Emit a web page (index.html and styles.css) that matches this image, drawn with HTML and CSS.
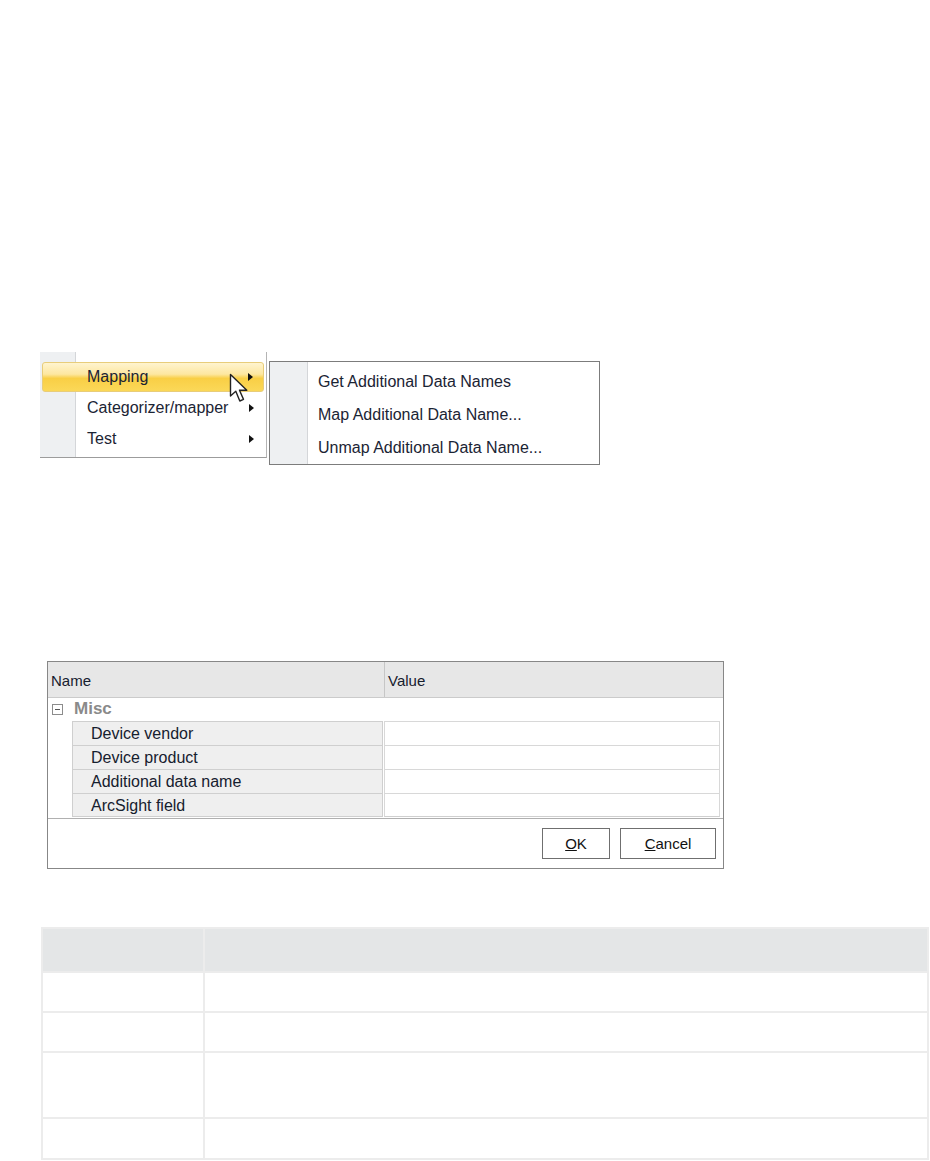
FILE: index.html
```html
<!doctype html>
<html lang="en">
<head>
	<meta charset="UTF-8">
	<title>Additional data mapping</title>
	<link rel="stylesheet" href="styles.css">
</head>
<body>
	<div class="menus">
		<ul class="ctx">
			<li class="item sel has-sub">Mapping</li>
			<li class="item has-sub">Categorizer/mapper</li>
			<li class="item has-sub">Test</li>
			<svg class="cursor" width="23" height="31" viewBox="0 0 23 31">
				<path d="M1.5 1.5 L1.5 23 L6.8 18.3 L10.8 28 L14.5 26.4 L10.5 17.2 L17.8 17.2 Z" fill="#fff" stroke="#222" stroke-width="1.4" stroke-linejoin="round"/>
			</svg>
		</ul>
		<ul class="sub">
			<li class="item">Get Additional Data Names</li>
			<li class="item">Map Additional Data Name...</li>
			<li class="item">Unmap Additional Data Name...</li>
		</ul>
	</div>

	<div class="dialog">
		<div class="grid-head">
			<div class="hcell">Name</div>
			<div class="hcell">Value</div>
		</div>
		<div class="cat"><span class="toggle"></span>Misc</div>
		<div class="props">
			<div class="pname">Device vendor</div><div class="pval"></div>
			<div class="pname">Device product</div><div class="pval"></div>
			<div class="pname">Additional data name</div><div class="pval"></div>
			<div class="pname">ArcSight field</div><div class="pval"></div>
		</div>
		<div class="foot">
			<button class="btn ok"><u>O</u>K</button>
			<button class="btn cancel"><u>C</u>ancel</button>
		</div>
	</div>

	<table class="params">
		<thead>
			<tr><th></th><th></th></tr>
		</thead>
		<tbody>
			<tr class="r1"><td></td><td></td></tr>
			<tr class="r2"><td></td><td></td></tr>
			<tr class="r3"><td></td><td></td></tr>
			<tr class="r4"><td></td><td></td></tr>
		</tbody>
	</table>
</body>
</html>
```

FILE: styles.css
```css
body,ul,li{
	margin:0;
	padding:0;
}
body{
	background:#fff;
	font:16px/1.2 "Liberation Sans", Arial, sans-serif;
	color:#1b2434;
}
ul li{
	list-style:none;
}

/* context menus */
.menus{
	display:flex;
	align-items:flex-start;
	padding:352px 0 0 40px;
}
.ctx{
	position:relative;
	width:226px;
	height:95px;
	padding-top:10px;
	border-right:1px solid #b4b4b4;
	border-bottom:1px solid #9c9c9c;
	background:linear-gradient(to right,#eef0f2 0 35px,#d4d6d9 35px 36px,#fff 36px);
}
.ctx .item{
	position:relative;
	height:31px;
	line-height:30px;
	margin:0 2px;
	padding-left:45px;
	box-sizing:border-box;
}
.ctx .item.sel{
	height:30px;
	margin-bottom:1px;
	border:1px solid #e8cd7a;
	border-radius:3px;
	padding-left:44px;
	line-height:28px;
	background:linear-gradient(#fff4cf 0%,#fde7a0 40%,#f9cf45 55%,#fbd858 100%);
}
.ctx .has-sub:after{
	content:"";
	position:absolute;
	right:10px;
	top:11px;
	border-left:5px solid #111;
	border-top:4px solid transparent;
	border-bottom:4px solid transparent;
}
.ctx .sel:after{
	top:10px;
}
.cursor{
	position:absolute;
	left:189px;
	top:21px;
}
.sub{
	width:329px;
	height:99px;
	margin:9px 0 0 2px;
	padding-top:3px;
	border:1px solid #7c7c7c;
	background:linear-gradient(to right,#eef0f2 0 37px,#d4d6d9 37px 38px,#fff 38px);
}
.sub .item{
	height:33px;
	line-height:33px;
	padding-left:48px;
}

/* property dialog */
.dialog{
	width:675px;
	height:206px;
	margin:196px 0 0 47px;
	border:1px solid #878787;
	font-size:16px;
	color:#16202e;
	display:flex;
	flex-direction:column;
}
.grid-head{
	display:grid;
	grid-template-columns:336px 1fr;
	height:35px;
	background:#e7e7e7;
	border-bottom:1px solid #cbcbcb;
	font-size:15px;
}
.hcell{
	padding:10px 0 0 3px;
}
.hcell + .hcell{
	border-left:1px solid #c6c6c6;
}
.cat{
	height:23px;
	display:flex;
	align-items:center;
	padding-left:4px;
	font-weight:700;
	font-size:17px;
	color:#8a8a8a;
}
.toggle{
	position:relative;
	width:9px;
	height:9px;
	border:1px solid #8c8c8c;
	margin-right:11px;
}
.toggle:after{
	content:"";
	position:absolute;
	left:2px;
	top:4px;
	width:5px;
	height:1px;
	background:#555;
}
.props{
	display:grid;
	grid-template-columns:311px 336px;
	grid-auto-rows:24px;
	column-gap:1px;
	margin-left:24px;
}
.pname{
	background:#efefef;
	border:1px solid #cfcfcf;
	border-bottom:0;
	padding:2px 0 0 18px;
	line-height:19px;
}
.pval{
	border:1px solid #d8d8d8;
	border-bottom:0;
	background:#fff;
}
.props div:nth-last-child(-n+2){
	border-bottom:1px solid #cfcfcf;
}
.foot{
	flex:1;
	margin-top:1px;
	border-top:1px solid #b0b0b0;
	display:flex;
	justify-content:flex-end;
	align-items:flex-start;
	gap:10px;
	padding:9px 7px 0 0;
}
.btn{
	height:31px;
	background:#fff;
	border:1px solid #6f6f6f;
	font:15px "Liberation Sans", Arial, sans-serif;
	color:#111;
	padding:0;
}
.btn.ok{
	width:68px;
}
.btn.cancel{
	width:96px;
}

/* parameter table */
.params{
	width:888px;
	margin:58px 0 0 41px;
	border-collapse:collapse;
}
.params th,
.params td{
	border:2px solid #ececec;
	padding:0;
}
.params th{
	height:42px;
	background:#e4e6e7;
}
.params th:first-child{
	width:160px;
}
.params .r1 td{
	height:38px;
}
.params .r2 td{
	height:38px;
}
.params .r3 td{
	height:64px;
}
.params .r4 td{
	height:39px;
}
```
